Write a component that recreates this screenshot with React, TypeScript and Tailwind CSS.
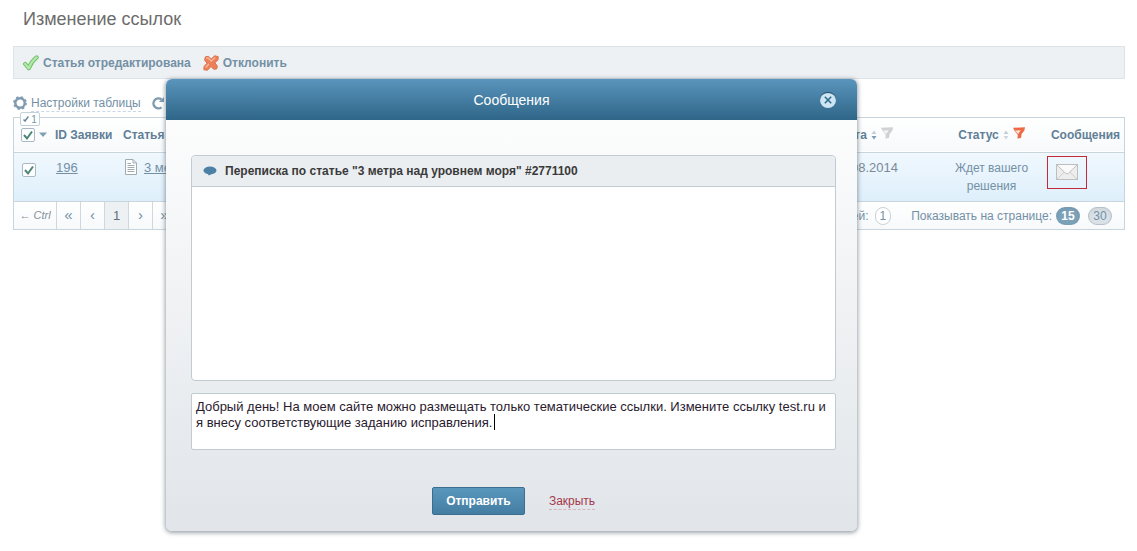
import { useState } from "react";
import type { ReactNode } from "react";

function CheckIcon() {
  return (
    <svg className="h-4 w-4 shrink-0" viewBox="0 0 16 16" fill="none" strokeLinecap="round" strokeLinejoin="round">
      <path d="m2.200 9 3.600 4.200C7.400 9 10 5.200 13.600 2.400" stroke="#6fbf6a" strokeWidth="4.200" />
      <path d="m2.200 9 3.600 4.200C7.400 9 10 5.200 13.600 2.400" stroke="#b2e9a8" strokeWidth="2.400" />
    </svg>
  );
}

function CrossIcon() {
  return (
    <svg className="h-4 w-4 shrink-0" viewBox="0 0 16 16">
      <path
        d="M2.400 1.800 5.600 1.400 8.200 4 11.600.8 15.200 1.600 15 4.800 12 7.800 14.400 11.200 13.600 14 10.600 14.200 8 11.600 4.400 15.200.9 14.800 1 11.600 4 8.200 1.600 5Z"
        fill="#ec8059"
        stroke="#d9744f"
        strokeLinejoin="round"
      />
      <path d="M3.200 3.200 5 2.900 8.200 6 12.200 2.400M2.600 12.600 5.800 9" fill="none" stroke="#f7b79b" strokeWidth="1.400" />
    </svg>
  );
}

function GearIcon() {
  return (
    <svg className="h-3.5 w-3.5 shrink-0" viewBox="0 0 14 14" fill="none" stroke="#7f9bb0">
      <circle cx="7" cy="7" r="4.700" strokeWidth="2.400" />
      <circle cx="7" cy="7" r="6.100" strokeWidth="1.600" strokeDasharray="2.400 2.390" />
    </svg>
  );
}

function ReloadIcon() {
  return (
    <svg className="h-3.5 w-3.5 shrink-0" viewBox="0 0 14 14">
      <path d="M10.500 3.400A5 5 0 1 0 10.500 11.400" fill="none" stroke="#7f9bb0" strokeWidth="2.400" />
      <path d="M7.800 6h5.200V1Z" fill="#7f9bb0" />
    </svg>
  );
}

function PageIcon() {
  return (
    <svg className="h-4 w-3.5 shrink-0" viewBox="0 0 14 16" fill="none" stroke="#a3abb1">
      <path d="M1.500.5H9l3.500 3.500v11.500h-11Z" fill="#fff" />
      <path d="M9 .5V4h3.500M3.500 4.500H7M3.500 6.500h7M3.500 8.500h7M3.500 10.500h7M3.500 12.500h7" />
    </svg>
  );
}

function SortIcon({ active }: { active?: boolean }) {
  return (
    <svg className="h-2.5 w-1.5 shrink-0" viewBox="0 0 6 10">
      <path d="M3 .5 5.500 4h-5Z" fill="#c5ced5" />
      <path d="M3 9.500.5 6h5Z" fill={active ? "#7f9db2" : "#d0d7dc"} />
    </svg>
  );
}

function FilterIcon({ active }: { active?: boolean }) {
  return (
    <svg className="mb-1 h-3 w-3 shrink-0" viewBox="0 0 12 12">
      <path
        d="M0 .8 12 .2 11.400 3.600 8.600 7 8 11 4.400 11.600 4.800 7.800 1.800 4.200Z"
        fill={active ? "#ee6a45" : "#cfd1d2"}
      />
      <path d="m1.800 3.600 6-.4L5.200 7Z" fill={active ? "#fde3da" : "#f5f5f5"} />
    </svg>
  );
}

function EnvelopeIcon() {
  return (
    <svg className="h-4 w-6 shrink-0" viewBox="0 0 24 16" fill="none">
      <rect x="1.500" y=".5" width="21" height="15" fill="#ededed" stroke="#bcbec0" />
      <path d="m2 15 7.500-7M22 15l-7.500-7" stroke="#cfcfcf" />
      <path d="m2 1 8.500 8.200q1.500 1.300 3 0L22 1" fill="#fafafa" stroke="#bdbfc1" />
    </svg>
  );
}

function BubbleIcon() {
  return (
    <svg className="h-3 w-3.5 shrink-0" viewBox="0 0 14 12" fill="#4d80a6">
      <ellipse cx="7" cy="5.500" rx="6.500" ry="3.900" />
      <path d="M5 8.500 5.600 10.500 9 8.800Z" />
    </svg>
  );
}

function Checkbox({ label }: { label: string }) {
  const [checked, setChecked] = useState(true);

  return (
    <label className="relative block h-3.5 w-3.5">
      <input
        type="checkbox"
        aria-label={label}
        checked={checked}
        onChange={() => setChecked(!checked)}
        className="block h-3.5 w-3.5 appearance-none rounded-xs border border-[#a9bac6] bg-white"
      />
      {checked && (
        <svg className="pointer-events-none absolute inset-0 h-3.5 w-3.5" viewBox="0 0 14 14">
          <path d="m3 7 3 3.500L11 3.500" fill="none" stroke="#4a8577" strokeWidth="2" />
        </svg>
      )}
    </label>
  );
}

function PagerButton({ label, current, children }: { label: string; current?: boolean; children: ReactNode }) {
  return (
    <button
      aria-label={label}
      className={`w-6 border-l border-[#cfd8de] text-center ${current ? "bg-[#eef1f4] text-[#5b6f7e]" : ""}`}
    >
      {children}
    </button>
  );
}

function RequestsTable() {
  return (
    <div className="relative border border-[#c9d5dc]">
      <span className="absolute -top-1.5 left-1.5 flex h-3.5 w-5 items-center justify-center gap-0.5 rounded-xs border border-[#c3d1db] bg-white text-[10px] text-[#7a96a9]">
        <svg className="h-1.5 w-1.5" viewBox="0 0 6 6">
          <path d="m.5 3.500 1.500 1.500L5.500.5" fill="none" stroke="#66869c" strokeWidth="1.500" />
        </svg>
        1
      </span>

      <table className="w-full table-fixed border-collapse text-[#7390a5]">
        <colgroup>
          <col className="w-9" />
          <col className="w-[68px]" />
          <col />
          <col className="w-[140px]" />
          <col className="w-[111px]" />
          <col className="w-[77px]" />
        </colgroup>
        <thead className="text-xs text-[#617f96]">
          <tr className="h-[34px] border-b border-[#c9d5dc] bg-linear-to-b from-white to-[#f7f9fb]">
            <th className="pl-[7px]">
              <div className="flex items-center gap-1">
                <Checkbox label="Выбрать все" />
                <svg className="h-1.5 w-2 shrink-0" viewBox="0 0 8 6">
                  <path d="M0 .5h8L4 5Z" fill="#7f9fb4" />
                </svg>
              </div>
            </th>
            <th className="pl-[5px] text-left whitespace-nowrap">ID Заявки</th>
            <th className="pl-[5px] text-left">Статья</th>
            <th>
              <div className="flex items-center justify-center gap-1">
                Дата <SortIcon active /> <FilterIcon />
              </div>
            </th>
            <th>
              <div className="flex items-center justify-center gap-1">
                Статус <SortIcon /> <FilterIcon active />
              </div>
            </th>
            <th>Сообщения</th>
          </tr>
        </thead>
        <tbody className="text-xs leading-[18px]">
          <tr className="h-[49px] bg-linear-to-b from-[#f1f8fe] to-[#deeffb] align-top">
            <td className="pt-2.5 pl-2">
              <Checkbox label="Заявка 196" />
            </td>
            <td className="pt-1.5 pl-1.5 text-[13px]">
              <a href="#request" className="underline">196</a>
            </td>
            <td className="pt-1.5 pl-1.5 text-[13px]">
              <div className="flex gap-1.5">
                <PageIcon />
                <a href="#article" className="underline">3 метра над уровнем моря</a>
              </div>
            </td>
            <td className="pt-1.5 text-center text-[13px] text-[#7a8a96]">11.08.2014</td>
            <td className="px-4 pt-1.5 text-center">Ждет вашего решения</td>
            <td className="pt-[3px]">
              <button aria-label="Открыть сообщения" className="flex h-[33px] w-10 items-center justify-center border border-[#c22a3a]">
                <EnvelopeIcon />
              </button>
            </td>
          </tr>
        </tbody>
      </table>

      <div className="flex h-7 items-stretch border-t border-[#c9d5dc] bg-linear-to-b from-white to-[#f7f9fb] text-[#7390a5]">
        <span className="flex w-[42px] items-center justify-center text-[11px] whitespace-nowrap text-[#84919b] italic">← Ctrl</span>
        <nav className="flex text-[15px] text-[#7390a5]">
          <PagerButton label="Первая">«</PagerButton>
          <PagerButton label="Назад">‹</PagerButton>
          <PagerButton label="Страница 1" current>
            <span className="text-[13px]">1</span>
          </PagerButton>
          <PagerButton label="Вперед">›</PagerButton>
          <PagerButton label="Последняя">»</PagerButton>
        </nav>
        <div className="ml-auto flex items-center pr-3 text-xs">
          <span>Всего записей:</span>
          <span className="ml-1.5 rounded-full border border-[#c9d2d9] bg-white px-1">1</span>
          <span className="mr-1 ml-5">Показывать на странице:</span>
          <button className="h-[18px] w-6 rounded-full bg-[#7ba1b9] font-bold text-white shadow-inner">15</button>
          <button className="ml-2 h-[18px] w-6 rounded-full border border-[#b4c1ca] bg-[#dae1e7] shadow-inner">30</button>
        </div>
      </div>
    </div>
  );
}

function MessagesDialog() {
  const [message, setMessage] = useState(
    "Добрый день! На моем сайте можно размещать только тематические ссылки. Измените ссылку test.ru и я внесу соответствующие заданию исправления."
  );

  return (
    <div
      role="dialog"
      aria-labelledby="dialog-title"
      className="absolute top-[79px] right-[280px] left-[166px] rounded-md bg-linear-to-b from-white to-[#e1e5e9] shadow-[0_1px_4px_1px_rgba(90,105,115,0.6)]"
    >
      <header className="relative flex h-[41px] items-center justify-center rounded-t-md bg-linear-to-b from-[#5a95bd] to-[#2f6688]">
        <h2 id="dialog-title" className="text-sm text-white">Сообщения</h2>
        <button
          aria-label="Закрыть окно"
          className="absolute right-[21px] flex h-4 w-4 items-center justify-center rounded-full border-t border-[#1d4a66] bg-[#cfe6f2]"
        >
          <svg className="h-2 w-2" viewBox="0 0 8 8">
            <path d="m.8.8 6.400 6.400M7.200.8.8 7.200" stroke="#2f6c8f" strokeWidth="1.600" />
          </svg>
        </button>
      </header>

      <div className="pt-[35px] pr-[21px] pb-4 pl-[25px]">
        <section className="rounded-sm border border-[#c1ccd2] bg-white">
          <div className="flex h-[31px] items-center gap-2 rounded-t-sm border-b border-[#c1ccd2] bg-[#ebeef1] px-[11px]">
            <BubbleIcon />
            <h3 className="text-xs font-bold text-[#3a3a3a]">Переписка по статье "3 метра над уровнем моря" #2771100</h3>
          </div>
          <div className="h-[193px]" />
        </section>

        <div className="relative mt-3">
          <textarea
            aria-label="Сообщение"
            value={message}
            onChange={(e) => setMessage(e.target.value)}
            className="block h-[57px] w-full resize-none rounded-xs border border-[#c1ccd2] bg-white px-1 py-[5px] text-[13px] leading-4 text-[#2a1a2e] outline-none"
          />
          <span className="absolute top-[21px] left-[303px] h-4 w-px bg-black" />
        </div>

        <div className="mt-[37px] flex items-center justify-center gap-6">
          <button className="h-7 w-[93px] rounded-xs border border-[#3b6d8e] bg-linear-to-b from-[#5a97bd] to-[#447da2] text-xs font-bold text-white">
            Отправить
          </button>
          <button className="border-b border-dashed border-[#d2b7bf] text-xs text-[#a5384b]">Закрыть</button>
        </div>
      </div>
    </div>
  );
}

export default function App() {
  return (
    <main className="relative min-h-screen bg-white pt-[7px] pr-3 pl-[13px] font-['Liberation_Sans',Arial,sans-serif]">
      <h1 className="pl-2.5 text-lg leading-6 text-[#6c6c6c]">Изменение ссылок</h1>

      <div className="mt-[15px] flex h-[33px] items-center gap-3 border border-[#dde3e8] bg-[#eef1f4] px-[9px] text-xs font-bold text-[#7390a5]">
        <button className="flex items-center gap-1">
          <CheckIcon />
          Статья отредактирована
        </button>
        <button className="flex items-center gap-1">
          <CrossIcon />
          Отклонить
        </button>
      </div>

      <div className="mt-3.5 mb-1 flex h-5 items-center gap-2.5 text-xs text-[#7390a5]">
        <button className="flex items-center gap-1">
          <GearIcon />
          <span className="border-b border-dashed border-[#cbd8e1]">Настройки таблицы</span>
        </button>
        <button aria-label="Обновить">
          <ReloadIcon />
        </button>
      </div>

      <RequestsTable />
      <MessagesDialog />
    </main>
  );
}
